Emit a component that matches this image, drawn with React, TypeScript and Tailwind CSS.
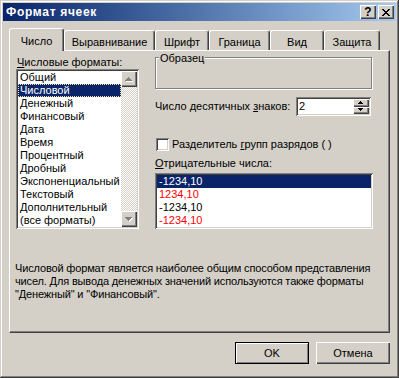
import React from "react";

const raised =
  "shadow-[inset_1px_1px_#ffffff,inset_-1px_-1px_#404040,inset_-2px_-2px_#808080]";
const sunken =
  "shadow-[inset_1px_1px_#808080,inset_-1px_-1px_#ffffff,inset_2px_2px_#404040,inset_-2px_-2px_#d4d0c8]";

const formats = [
  "Общий",
  "Числовой",
  "Денежный",
  "Финансовый",
  "Дата",
  "Время",
  "Процентный",
  "Дробный",
  "Экспоненциальный",
  "Текстовый",
  "Дополнительный",
  "(все форматы)",
];

const negatives = [
  { text: "-1234,10", red: false },
  { text: "1234,10", red: true },
  { text: "-1234,10", red: false },
  { text: "-1234,10", red: true },
];

const tabs = [
  { label: "Число", w: "w-[55px]" },
  { label: "Выравнивание", w: "w-[91px]" },
  { label: "Шрифт", w: "w-[54px]" },
  { label: "Граница", w: "w-[61px]" },
  { label: "Вид", w: "w-[54px]" },
  { label: "Защита", w: "w-[56px]" },
];

// pixel triangle, drawn row by row so it stays crisp
const Arrow = ({ up, size, color, shadow }: { up: boolean; size: number; color: string; shadow?: boolean }) => {
  const w = size * 2 - 1;
  const rows = Array.from({ length: size }, (_, i) => {
    const r = up ? i : size - 1 - i;
    return { x: size - 1 - r, y: i, w: r * 2 + 1 };
  });
  return (
    <svg width={w + 1} height={size + 1} shapeRendering="crispEdges">
      {shadow &&
        rows.map((r) => <rect key={"s" + r.y} x={r.x + 1} y={r.y + 1} width={r.w} height={1} fill="#ffffff" />)}
      {rows.map((r) => (
        <rect key={r.y} x={r.x} y={r.y} width={r.w} height={1} fill={color} />
      ))}
    </svg>
  );
};

const CloseGlyph = () => (
  <svg width="8" height="7" shapeRendering="crispEdges">
    {[0, 1, 2, 3, 4, 5, 6].map((y) => {
      const d = y <= 3 ? y : 6 - y;
      return (
        <g key={y}>
          <rect x={d} y={y} width={2} height={1} fill="#000" />
          <rect x={6 - d} y={y} width={2} height={1} fill="#000" />
        </g>
      );
    })}
  </svg>
);

const App = () => {
  return (
    <div
      className="w-[399px] h-[378px] bg-[#d4d0c8] p-[3px] flex flex-col font-['Liberation_Sans',Arial,sans-serif] text-[11px] leading-[13px] text-black select-none shadow-[inset_-1px_-1px_#404040,inset_1px_1px_#d4d0c8,inset_-2px_-2px_#808080,inset_2px_2px_#ffffff]"
    >
      {/* title bar */}
      <div className="h-[18px] flex items-center pl-[3px] pr-[2px] bg-linear-to-r from-[#0a246a] to-[#a6caf0]">
        <span className="flex-1 text-white font-bold text-[12px] tracking-[0.7px]">Формат ячеек</span>
        <div className={`w-[16px] h-[14px] bg-[#d4d0c8] flex items-center justify-center font-bold text-[12px] leading-[12px] ${raised}`}>
          ?
        </div>
        <div className={`w-[16px] h-[14px] ml-[2px] bg-[#d4d0c8] flex items-center justify-center ${raised}`}>
          <CloseGlyph />
        </div>
      </div>

      <div className="px-[6px] pt-[7px]">
        {/* tabs */}
        <div className="flex items-end h-[22px]">
          {tabs.map((t, i) =>
            i === 0 ? (
              <div
                key={t.label}
                className={`${t.w} h-[23px] -mb-[1px] relative z-10 bg-[#d4d0c8] border-t border-l border-r border-t-white border-l-white border-r-[#404040] rounded-t-[3px] shadow-[inset_-1px_0_#808080] flex justify-center pt-[6px]`}
              >
                {t.label}
              </div>
            ) : (
              <div
                key={t.label}
                className={`${t.w} h-[20px] border-t border-l border-r border-t-white border-l-white border-r-[#404040] rounded-t-[3px] shadow-[inset_-1px_0_#808080] flex justify-center pt-[5px]`}
              >
                {t.label}
              </div>
            )
          )}
        </div>

        {/* panel */}
        <div className="h-[283px] border-t border-l border-r border-b border-t-white border-l-white border-r-[#404040] border-b-[#404040] shadow-[inset_-1px_-1px_#808080] flex flex-col">
          <div className="flex pl-[6px]">
            {/* left column */}
            <div className="flex flex-col pt-[5px] w-[123px]">
              <div className="h-[13px] pl-[1px]">
                <u>Ч</u>исловые форматы:
              </div>
              <div className={`h-[160px] bg-white p-[2px] flex ${sunken}`}>
                <div className="flex-1 flex flex-col">
                  {formats.map((f, i) =>
                    i === 1 ? (
                      <div
                        key={f}
                        className="h-[13px] pl-[2px] bg-[#0a246a] text-white outline-1 outline-dotted outline-[#f5db95] -outline-offset-1"
                      >
                        {f}
                      </div>
                    ) : (
                      <div key={f} className="h-[13px] pl-[2px] whitespace-nowrap">
                        {f}
                      </div>
                    )
                  )}
                </div>
                <div className="w-[16px] flex flex-col">
                  <div className={`h-[16px] bg-[#d4d0c8] flex items-center justify-center ${raised}`}>
                    <Arrow up size={4} color="#808080" shadow />
                  </div>
                  <div className="flex-1 bg-[image:repeating-conic-gradient(#d4d0c8_0_25%,#ffffff_0_50%)] bg-[length:2px_2px]" />
                  <div className={`h-[16px] bg-[#d4d0c8] flex items-center justify-center ${raised}`}>
                    <Arrow up={false} size={4} color="#808080" shadow />
                  </div>
                </div>
              </div>
            </div>

            {/* right column */}
            <div className="flex flex-col ml-[16px] w-[218px]">
              <div className="mt-[6px] w-[217px] h-[32px] relative border border-[#808080] shadow-[inset_1px_1px_#ffffff,1px_1px_#ffffff]">
                <span className="absolute -top-[6px] left-[3px] px-[1px] bg-[#d4d0c8]">Образец</span>
              </div>

              <div className="mt-[8px] h-[19px] flex items-center">
                <span className="flex-1">
                  Число десятичных <u>з</u>наков:
                </span>
                <div className={`w-[75px] h-[19px] mr-[2px] bg-white p-[2px] flex ${sunken}`}>
                  <span className="flex-1 pl-[1px] pt-[1px]">2</span>
                  <div className="w-[16px] flex flex-col">
                    <div className={`flex-1 bg-[#d4d0c8] flex items-center justify-center ${raised}`}>
                      <Arrow up size={3} color="#000000" />
                    </div>
                    <div className={`flex-1 bg-[#d4d0c8] flex items-center justify-center ${raised}`}>
                      <Arrow up={false} size={3} color="#000000" />
                    </div>
                  </div>
                </div>
              </div>

              <div className="mt-[22px] h-[13px] flex items-center">
                <div className={`w-[13px] h-[13px] ml-[1px] bg-white ${sunken}`} />
                <span className="ml-[3px]">
                  Разделитель <u>г</u>рупп разрядов ( )
                </span>
              </div>

              <div className="mt-[6px] h-[13px]">
                <u>О</u>трицательные числа:
              </div>
              <div className={`mt-[3px] h-[56px] bg-white p-[2px] flex flex-col ${sunken}`}>
                {negatives.map((n, i) => (
                  <div
                    key={i}
                    className={
                      i === 0
                        ? "h-[13px] pl-[2px] bg-[#0a246a] text-white"
                        : n.red
                        ? "h-[13px] pl-[2px] text-[#ff0000]"
                        : "h-[13px] pl-[2px]"
                    }
                  >
                    {n.text}
                  </div>
                ))}
              </div>
            </div>
          </div>

          <p className="mt-[33px] pl-[5px] tracking-[-0.15px]">
            Числовой формат является наиболее общим способом представления
            <br />
            чисел. Для вывода денежных значений используются также форматы
            <br />
            "Денежный" и "Финансовый".
          </p>
        </div>
      </div>

      {/* buttons */}
      <div className="mt-[9px] flex justify-end gap-[7px] pr-[6px]">
        <button className="w-[74px] h-[22px] bg-[#d4d0c8] border border-black shadow-[inset_1px_1px_#ffffff,inset_-1px_-1px_#808080] flex items-center justify-center">
          OK
        </button>
        <button className={`w-[74px] h-[22px] bg-[#d4d0c8] flex items-center justify-center ${raised}`}>
          Отмена
        </button>
      </div>
    </div>
  );
};

export default App;
